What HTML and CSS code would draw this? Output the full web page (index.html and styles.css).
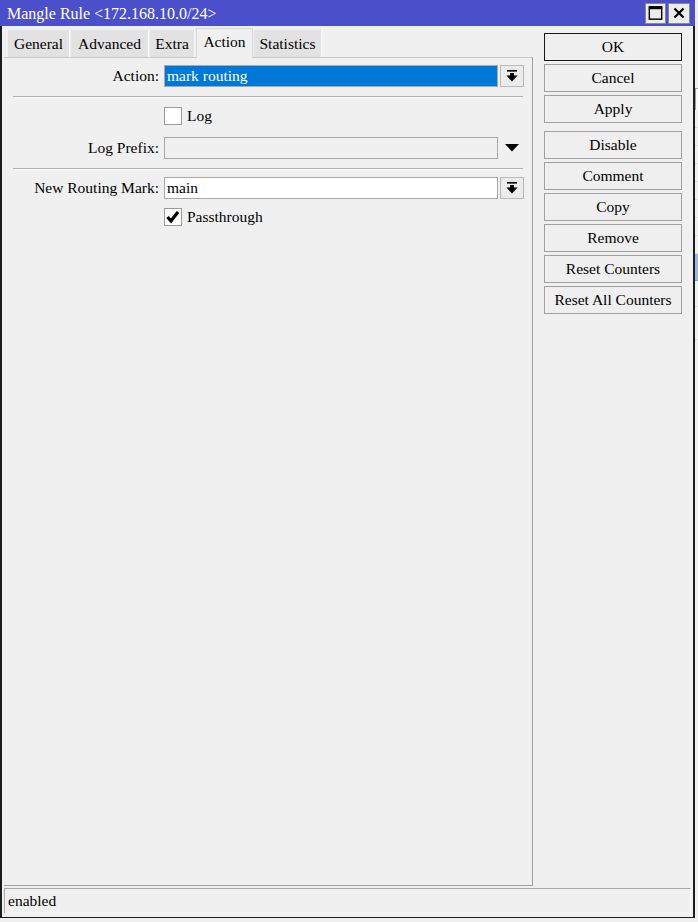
FILE: index.html
```html
<!DOCTYPE html>
<html>
<head>
<meta charset="utf-8">
<link rel="stylesheet" href="styles.css">
</head>
<body>
<div class="screen">
  <div class="window">
    <div class="titlebar">
      <span class="title">Mangle Rule &lt;172.168.10.0/24&gt;</span>
      <div class="winbtns">
        <div class="winbtn"><svg width="20" height="20" viewBox="0 0 20 20"><rect x="3.5" y="3.5" width="13" height="13" fill="none" stroke="#000" stroke-width="1.5"/><rect x="3" y="3" width="14" height="3" fill="#000"/></svg></div>
        <div class="winbtn close"><svg width="22" height="20" viewBox="0 0 22 20"><path d="M6 5 L16 15 M16 5 L6 15" stroke="#000" stroke-width="2.4"/></svg></div>
      </div>
    </div>
    <div class="main">
      <div class="leftcol">
        <div class="tabs">
          <div class="tab">General</div>
          <div class="tab">Advanced</div>
          <div class="tab">Extra</div>
          <div class="tab active">Action</div>
          <div class="tab">Statistics</div>
        </div>
        <div class="panel">
          <div class="row r-action">
            <div class="label">Action:</div>
            <div class="input selected">mark routing</div>
            <div class="ddbtn"><svg width="12" height="12" viewBox="0 0 12 12"><rect x="1" y="0" width="10" height="1.6" fill="#000"/><rect x="4" y="3" width="4" height="3" fill="#000"/><path d="M0.5 5.5 H11.5 L6 11.5 Z" fill="#000"/></svg></div>
          </div>
          <div class="sep s1"></div>
          <div class="row r-log">
            <div class="label"></div>
            <div class="check"></div>
            <div class="checklabel">Log</div>
          </div>
          <div class="row r-prefix">
            <div class="label">Log Prefix:</div>
            <div class="input disabled"></div>
            <div class="arrow"><svg width="14" height="8" viewBox="0 0 14 8"><path d="M0 0 H14 L7 7.5 Z" fill="#000"/></svg></div>
          </div>
          <div class="sep s2"></div>
          <div class="row r-mark">
            <div class="label">New Routing Mark:</div>
            <div class="input">main</div>
            <div class="ddbtn"><svg width="12" height="12" viewBox="0 0 12 12"><rect x="1" y="0" width="10" height="1.6" fill="#000"/><rect x="4" y="3" width="4" height="3" fill="#000"/><path d="M0.5 5.5 H11.5 L6 11.5 Z" fill="#000"/></svg></div>
          </div>
          <div class="row r-pass">
            <div class="label"></div>
            <div class="check"><svg width="16" height="16" viewBox="0 0 16 16"><path d="M2.5 8 L6 12 L13 3" fill="none" stroke="#000" stroke-width="3.2"/></svg></div>
            <div class="checklabel">Passthrough</div>
          </div>
        </div>
      </div>
      <div class="buttons">
        <div class="btn default">OK</div>
        <div class="btn">Cancel</div>
        <div class="btn">Apply</div>
        <div class="btn gap">Disable</div>
        <div class="btn">Comment</div>
        <div class="btn">Copy</div>
        <div class="btn">Remove</div>
        <div class="btn">Reset Counters</div>
        <div class="btn">Reset All Counters</div>
      </div>
    </div>
    <div class="status"><div class="statuscell">enabled</div></div>
  </div>
  <div class="behind">
    <div class="bg-top"></div>
    <div class="bg-box"></div>
    <div class="bg-line"></div>
    <div class="bg-line"></div>
    <div class="bg-line"></div>
    <div class="bg-line"></div>
    <div class="bg-line"></div>
    <div class="bg-line"></div>
    <div class="bg-line"></div>
    <div class="bg-line"></div>
    <div class="bg-sel"></div>
    <div class="bg-line l2"></div>
    <div class="bg-line l3"></div>
  </div>
</div>
</body>
</html>
```

FILE: styles.css
```css
* { box-sizing: border-box; }
html, body { margin: 0; padding: 0; }
body {
  width: 698px;
  height: 922px;
  background: #f0f0f0;
  font-family: "Liberation Serif", "Times New Roman", serif;
  font-size: 15.5px;
  color: #000;
  overflow: hidden;
}
.screen { display: flex; height: 922px; }

.window {
  width: 695px;
  height: 918px;
  background: #f0f0f0;
  border: 1px solid #1c1c1c;
  border-top: none;
  border-left-width: 2px;
  border-right-width: 2px;
  display: flex;
  flex-direction: column;
}
.titlebar {
  height: 26px;
  background: #4b4fc9;
  display: flex;
  align-items: center;
  justify-content: space-between;
  margin: 0 -2px 0 -2px;
  padding-left: 7px;
  padding-right: 5px;
}
.title { color: #fff; font-size: 16px; position: relative; top: 1px; }
.winbtns { display: flex; gap: 2px; }
.winbtn {
  width: 21px; height: 21px;
  background: #ececec;
  border: 1px solid #8a8a8a;
  display: flex; align-items: center; justify-content: center;
}
.winbtn.close { width: 22px; }

.main { display: flex; flex: 1; min-height: 0; }
.leftcol { margin-left: 2px; width: 529px; display: flex; flex-direction: column; }
.tabs { display: flex; height: 31px; padding: 4px 0 0 4px; align-items: flex-end; gap: 1px; position: relative; z-index: 1; }
.tab {
  height: 27px;
  background: #e2e2e2;
  border-right: 1px solid #fafafa;
  display: flex; align-items: center; justify-content: center;
  white-space: nowrap;
}
.tab:nth-child(1) { width: 62px; }
.tab:nth-child(2) { width: 78px; }
.tab:nth-child(3) { width: 45px; }
.tab:nth-child(5) { width: 68px; }
.tab.active {
  width: 57px;
  height: 30px;
  background: #f0f0f0;
  border: 1px solid #d8d8d8;
  border-bottom: none;
  margin-bottom: -1px;
  padding-bottom: 4px;
}
.panel {
  flex: 1;
  border-top: 1px solid #c8c8c8;
  border-right: 1px solid #a0a0a0;
  border-bottom: 1px solid #a0a0a0;
  padding-top: 7px;
  display: flex;
  flex-direction: column;
}
.row { display: flex; align-items: center; height: 22px; }
.label { width: 155px; text-align: right; flex: none; white-space: nowrap; }
.input {
  margin-left: 5px;
  width: 334px;
  height: 22px;
  border: 1px solid #a8a8a8;
  background: #fff;
  padding: 0 2px;
  line-height: 20px;
  white-space: nowrap;
}
.input.selected { background: #0078d7; color: #fff; }
.input.disabled { background: #f0f0f0; }
.ddbtn {
  margin-left: 2px;
  width: 24px; height: 22px;
  border: 1px solid #b8b8b8;
  background: #ececec;
  display: flex; align-items: center; justify-content: center;
}
.arrow { margin-left: 7px; display: flex; align-items: center; height: 22px; padding-bottom: 1px; }
.sep { margin-left: 9px; width: 510px; height: 2px; background: #b0b0b0; border-bottom: 1px solid #fbfbfb; }
.s1 { margin-top: 9px; }
.s2 { margin-top: 9px; }
.r-log { margin-top: 9px; height: 18px; }
.r-prefix { margin-top: 12px; }
.r-mark { margin-top: 7px; }
.r-pass { margin-top: 9px; height: 18px; }
.check {
  margin-left: 5px;
  width: 18px; height: 18px;
  border: 1px solid #9a9a9a;
  background: #fff;
  display: flex; align-items: center; justify-content: center;
}
.checklabel { margin-left: 5px; }

.buttons {
  margin-left: 11px;
  padding-top: 7px;
  display: flex;
  flex-direction: column;
  gap: 3px;
}
.btn {
  width: 138px; height: 28px;
  border: 1px solid #a0a0a0;
  background: #efefef;
  display: flex; align-items: center; justify-content: center;
  white-space: nowrap;
}
.btn.default { border-color: #1a1a1a; }
.btn.gap { margin-top: 5px; }

.status { height: 31px; padding: 2px 2px 3px 2px; }
.statuscell {
  height: 26px;
  border: 1px solid #a8a8a8;
  border-right-color: #f8f8f8;
  border-bottom-color: #f8f8f8;
  padding-left: 3px;
  line-height: 24px;
}

.behind { flex: 1; display: flex; flex-direction: column; background: #f0f0f0; }
.bg-top { height: 88px; }
.bg-box { height: 22px; border-top: 1px solid #a0a0a0; border-left: 1px solid #a0a0a0; background: #f8f8f8; }
.bg-line { height: 18px; border-bottom: 1px solid #dcdcdc; flex: none; }
.bg-sel { height: 27px; background: #9db6dc; border-bottom: 1px solid #7f9fd0; flex: none; }
.l2 { height: 26px; }
.l3 { height: 33px; }
```
